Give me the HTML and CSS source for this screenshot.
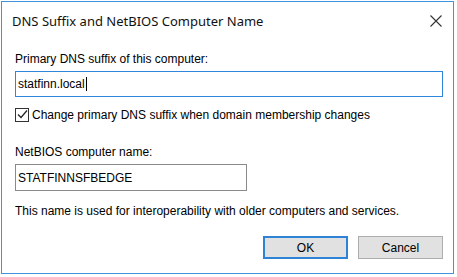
FILE: index.html
```html
<!DOCTYPE html>
<html lang="en">
<head>
    <meta charset="UTF-8">
    <title>DNS Suffix and NetBIOS Computer Name</title>
    <link rel="stylesheet" href="styles.css">
</head>
<body>
    <div class="window">
        <div class="titlebar">
            <span class="title">DNS Suffix and NetBIOS Computer Name</span>
            <button class="close" title="Close">
                <svg width="12" height="12" viewBox="0 0 12 12">
                    <path d="M0.5 0.5 L11.5 11.5 M11.5 0.5 L0.5 11.5" stroke="#333" stroke-width="1.1" fill="none"/>
                </svg>
            </button>
        </div>
        <div class="content">
            <div class="label">Primary DNS suffix of this computer:</div>
            <div class="field field-wide focused">statfinn.local<span class="caret"></span></div>

            <label class="check-row">
                <span class="checkbox">
                    <svg width="11" height="11" viewBox="0 0 11 11">
                        <path d="M1 5.5 L4 8.5 L10 1.5" stroke="#222" stroke-width="1.2" fill="none"/>
                    </svg>
                </span>
                Change primary DNS suffix when domain membership changes
            </label>

            <div class="label label-netbios">NetBIOS computer name:</div>
            <div class="field field-short">STATFINNSFBEDGE</div>

            <p class="info">This name is used for interoperability with older computers and services.</p>

            <div class="buttons">
                <button class="btn btn-default">OK</button>
                <button class="btn">Cancel</button>
            </div>
        </div>
    </div>
</body>
</html>
```

FILE: styles.css
```css
body {
    margin: 0;
    padding: 1px;
    background-color: white;
    font-family: "Liberation Sans", Arial, sans-serif;
    font-size: 12px;
    color: #000;
}
.window {
    width: 453px;
    height: 273px;
    box-sizing: border-box;
    border: 1px solid #3f94dc;
    background-color: white;
}
.titlebar {
    height: 38px;
    display: flex;
    align-items: center;
    justify-content: space-between;
    padding: 0 5px 0 10px;
}
.title {
    font-family: "Noto Sans", sans-serif;
    font-size: 13px;
    color: #111;
}
.close {
    width: 24px;
    height: 24px;
    border: none;
    background: none;
    padding: 0;
    display: flex;
    align-items: center;
    justify-content: center;
}
.content {
    padding: 12px 10px 0 13px;
}
.label {
    line-height: 14px;
}
.field {
    box-sizing: border-box;
    margin-top: 5px;
    border: 1px solid #8a8a8a;
    padding: 0 2px;
    display: flex;
    align-items: center;
    line-height: 14px;
}
.field-wide {
    width: 428px;
    height: 26px;
}
.field-short {
    width: 232px;
    height: 27px;
}
.focused {
    border-color: #2e86dd;
}
.caret {
    display: inline-block;
    width: 1px;
    height: 14px;
    background-color: #000;
    margin-left: 1px;
}
.check-row {
    display: flex;
    align-items: center;
    margin-top: 10px;
    height: 15px;
    line-height: 14px;
}
.checkbox {
    box-sizing: border-box;
    width: 14px;
    height: 14px;
    border: 1px solid #333;
    margin-right: 3px;
    display: flex;
    align-items: center;
    justify-content: center;
}
.label-netbios {
    margin-top: 23px;
}
.info {
    margin: 13px 0 0 0;
    line-height: 14px;
}
.buttons {
    display: flex;
    justify-content: flex-end;
    gap: 10px;
    margin-top: 18px;
}
.btn {
    box-sizing: border-box;
    width: 85px;
    height: 23px;
    background-color: #e1e1e1;
    border: 1px solid #adadad;
    font-family: "Liberation Sans", Arial, sans-serif;
    font-size: 12px;
    padding: 0;
    color: #000;
}
.btn-default {
    border: 2px solid #2f83d6;
}
```
